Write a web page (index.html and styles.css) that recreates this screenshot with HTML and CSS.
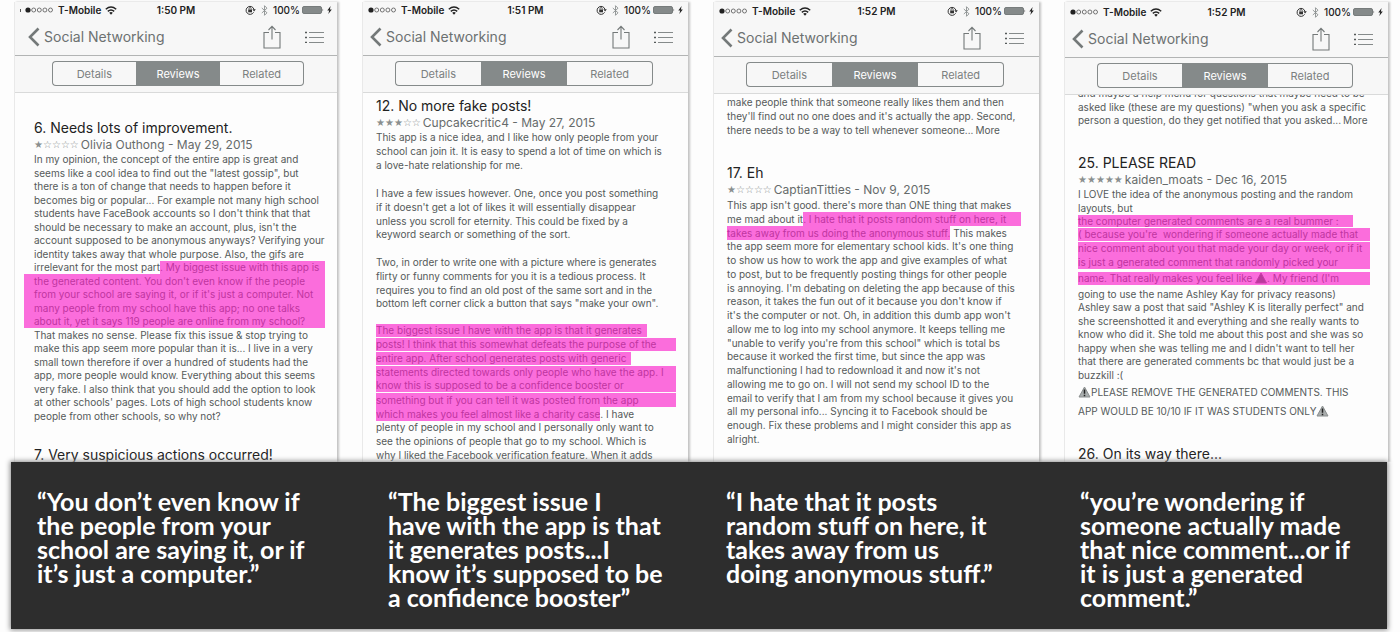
FILE: index.html
```html
<!DOCTYPE html>
<html lang="en">
<head>
<meta charset="utf-8">
<title>App reviews</title>
<link rel="stylesheet" href="styles.css">
</head>
<body>
<svg class="sprite" aria-hidden="true">
  <symbol id="dots" viewBox="0 0 29 6"><circle cx="3" cy="3" r="2.6" fill="#222"/><g fill="none" stroke="#555" stroke-width=".8"><circle cx="8.700" cy="3" r="2"/><circle cx="14.300" cy="3" r="2"/><circle cx="19.900" cy="3" r="2"/><circle cx="25.500" cy="3" r="2"/></g></symbol>
  <symbol id="wifi" viewBox="0 0 12 9"><g fill="none" stroke="#222" stroke-width="1.500"><path d="M.8 3.300Q6-1.200 11.200 3.300"/><path d="M2.800 5.400Q6 2.600 9.200 5.400"/></g><path d="M4.200 6.800Q6 5.400 7.800 6.800L6 8.800Z" fill="#222"/></symbol>
  <symbol id="lock" viewBox="0 0 11 10"><path d="M8.600 7.300A4 4 0 1 1 9 4.500" fill="none" stroke="#333" stroke-width="1"/><path d="M7.400 4.300h3.400L9.100 6.500Z" fill="#333"/><rect x="3.200" y="4.500" width="3.800" height="2.800" fill="#333"/><path d="M4 4.500V3.600a1.100 1.100 0 0 1 2.200 0v.9" fill="none" stroke="#333" stroke-width=".8"/></symbol>
  <symbol id="bt" viewBox="0 0 7 11"><path d="M.8 3 6 7.800 3.500 10.300V.7L6 3.200.8 8" fill="none" stroke="#8a8f8f" stroke-width=".9"/></symbol>
  <symbol id="batt" viewBox="0 0 22 8"><rect x=".5" y=".5" width="19" height="7" rx="1.500" fill="#858a8a" stroke="#777c7c"/><path d="M20.500 2.500q1.500 1.500 0 3Z" fill="#555"/></symbol>
  <symbol id="bolt" viewBox="0 0 5 8"><path d="M3.600 0 .3 4.400H2.200L1.300 8 4.800 3.400H2.900Z" fill="#222"/></symbol>
  <symbol id="back" viewBox="0 0 12 20"><path d="M10.500 1.500 2 10l8.500 8.500" fill="none" stroke="#747979" stroke-width="2.600"/></symbol>
  <symbol id="share" viewBox="0 0 18 24"><g fill="none" stroke="#747979" stroke-width="1.100"><path d="M6 7.500H1v15.500h16V7.500H12"/><path d="M9 14.500V1.500M5.500 5 9 1.300 12.500 5"/></g></symbol>
  <symbol id="list" viewBox="0 0 19 12"><path d="M4 1.500h15M4 6.500h15M4 11.500h15" stroke="#858a8a" fill="none"/><path d="M0 1.500h2M0 6.500h2M0 11.500h2" stroke="#555a5a" fill="none" stroke-width="1.400"/></symbol>
  <symbol id="warn" viewBox="0 0 12 12"><path d="M6 1 11.500 11H.5Z" fill="#a9adad" stroke="#8a8e8e" stroke-linejoin="round"/><path d="M6 3.500v4.200M6 8.700v1.500" stroke="#222" stroke-width="1.500"/></symbol>
  <symbol id="alert" viewBox="0 0 12 12"><path d="M6 1 11.500 11H.5Z" fill="#b93a9c" stroke="#c93aa9" stroke-linejoin="round"/></symbol>
</svg>

<main class="screens">
  <section class="phone first">
    <header class="bar">
      <div class="status">
        <div class="carrier"><i class="tick"></i><svg width="29" height="6"><use href="#dots"/></svg><span>T-Mobile</span><svg width="12" height="9"><use href="#wifi"/></svg></div>
        <time>1:50 PM</time>
        <div class="power"><svg width="11" height="10"><use href="#lock"/></svg><svg width="7" height="11"><use href="#bt"/></svg><span>100%</span><svg class="cell" width="22" height="8"><use href="#batt"/></svg><svg class="bolt" width="5" height="8"><use href="#bolt"/></svg></div>
      </div>
      <nav class="nav">
        <a class="back" href="#"><svg width="12" height="20"><use href="#back"/></svg>Social Networking</a>
        <button class="icon" aria-label="Share"><svg width="18" height="24"><use href="#share"/></svg></button>
        <button class="icon" aria-label="List"><svg width="19" height="12"><use href="#list"/></svg></button>
      </nav>
      <div class="tabs"><button>Details</button><button class="on">Reviews</button><button>Related</button></div>
    </header>
    <div class="reviews">
      <h2>6. Needs lots of improvement.</h2>
      <div class="by"><span class="stars">★☆☆☆☆</span>Olivia Outhong - May 29, 2015</div>
      <p class="snug">
        <span>In my opinion, the concept of the entire app is great and</span>
        <span>seems like a cool idea to find out the "latest gossip", but</span>
        <span>there is a ton of change that needs to happen before it</span>
        <span>becomes big or popular... For example not many high school</span>
        <span>students have FaceBook accounts so I don't think that that</span>
        <span>should be necessary to make an account, plus, isn't the</span>
        <span>account supposed to be anonymous anyways? Verifying your</span>
        <span>identity takes away that whole purpose. Also, the gifs are</span>
        <span class="split">irrelevant for the most part<mark class="grow">. My biggest issue with this app is</mark></span>
        <span><mark class="full out">the generated content. You don't even know if the people</mark></span>
        <span><mark class="full out">from your school are saying it, or if it's just a computer. Not</mark></span>
        <span><mark class="full out">many people from my school have this app; no one talks</mark></span>
        <span><mark class="full out">about it, yet it says 119 people are online from my school?</mark></span>
        <span>That makes no sense. Please fix this issue &amp; stop trying to</span>
        <span>make this app seem more popular than it is... I live in a very</span>
        <span>small town therefore if over a hundred of students had the</span>
        <span>app, more people would know. Everything about this seems</span>
        <span>very fake. I also think that you should add the option to look</span>
        <span>at other schools' pages. Lots of high school students know</span>
        <span>people from other schools, so why not?</span>
      </p>
      <h2 class="next">7. Very suspicious actions occurred!</h2>
    </div>
  </section>

  <section class="phone second">
    <header class="bar">
      <div class="status">
        <div class="carrier"><svg width="29" height="6"><use href="#dots"/></svg><span>T-Mobile</span><svg width="12" height="9"><use href="#wifi"/></svg></div>
        <time>1:51 PM</time>
        <div class="power"><svg width="11" height="10"><use href="#lock"/></svg><svg width="7" height="11"><use href="#bt"/></svg><span>100%</span><svg class="cell" width="22" height="8"><use href="#batt"/></svg><svg class="bolt" width="5" height="8"><use href="#bolt"/></svg></div>
      </div>
      <nav class="nav">
        <a class="back" href="#"><svg width="12" height="20"><use href="#back"/></svg>Social Networking</a>
        <button class="icon" aria-label="Share"><svg width="18" height="24"><use href="#share"/></svg></button>
        <button class="icon" aria-label="List"><svg width="19" height="12"><use href="#list"/></svg></button>
      </nav>
      <div class="tabs"><button>Details</button><button class="on">Reviews</button><button>Related</button></div>
    </header>
    <div class="reviews">
      <h2>12. No more fake posts!</h2>
      <div class="by"><span class="stars">★★★☆☆</span>Cupcakecritic4 - May 27, 2015</div>
      <p>
        <span>This app is a nice idea, and I like how only people from your</span>
        <span>school can join it. It is easy to spend a lot of time on which is</span>
        <span>a love-hate relationship for me.</span>
      </p>
      <p>
        <span>I have a few issues however. One, once you post something</span>
        <span>if it doesn't get a lot of likes it will essentially disappear</span>
        <span>unless you scroll for eternity. This could be fixed by a</span>
        <span>keyword search or something of the sort.</span>
      </p>
      <p>
        <span>Two, in order to write one with a picture where is generates</span>
        <span>flirty or funny comments for you it is a tedious process. It</span>
        <span>requires you to find an old post of the same sort and in the</span>
        <span>bottom left corner click a button that says "make your own".</span>
      </p>
      <p>
        <span><mark class="gap trail">The biggest issue I have with the app is that it generates</mark></span>
        <span><mark class="full gap">posts! I think that this somewhat defeats the purpose of the</mark></span>
        <span><mark class="gap trail">entire app. After school generates posts with generic</mark></span>
        <span><mark class="full">statements directed towards only people who have the app. I</mark></span>
        <span><mark class="full gap">know this is supposed to be a confidence booster or</mark></span>
        <span><mark class="full">something but if you can tell it was posted from the app</mark></span>
        <span><mark>which makes you feel almost like a charity case</mark>. I have</span>
        <span>plenty of people in my school and I personally only want to</span>
        <span>see the opinions of people that go to my school. Which is</span>
        <span>why I liked the Facebook verification feature. When it adds</span>
      </p>
    </div>
  </section>

  <section class="phone third">
    <header class="bar">
      <div class="status">
        <div class="carrier"><svg width="29" height="6"><use href="#dots"/></svg><span>T-Mobile</span><svg width="12" height="9"><use href="#wifi"/></svg></div>
        <time>1:52 PM</time>
        <div class="power"><svg width="11" height="10"><use href="#lock"/></svg><svg width="7" height="11"><use href="#bt"/></svg><span>100%</span><svg class="cell" width="22" height="8"><use href="#batt"/></svg><svg class="bolt" width="5" height="8"><use href="#bolt"/></svg></div>
      </div>
      <nav class="nav">
        <a class="back" href="#"><svg width="12" height="20"><use href="#back"/></svg>Social Networking</a>
        <button class="icon" aria-label="Share"><svg width="18" height="24"><use href="#share"/></svg></button>
        <button class="icon" aria-label="List"><svg width="19" height="12"><use href="#list"/></svg></button>
      </nav>
      <div class="tabs"><button>Details</button><button class="on">Reviews</button><button>Related</button></div>
    </header>
    <div class="reviews">
      <p>
        <span>make people think that someone really likes them and then</span>
        <span>they'll find out no one does and it's actually the app. Second,</span>
        <span>there needs to be a way to tell whenever someone...<a class="more" href="#">More</a></span>
      </p>
      <h2>17. Eh</h2>
      <div class="by"><span class="stars">★☆☆☆☆</span>CaptianTitties - Nov 9, 2015</div>
      <p>
        <span>This app isn't good. there's more than ONE thing that makes</span>
        <span class="split">me mad about it<mark class="grow">. I hate that it posts random stuff on here, it</mark></span>
        <span><mark>takes away from us doing the anonymous stuff.</mark> This makes</span>
        <span>the app seem more for elementary school kids. It's one thing</span>
        <span>to show us how to work the app and give examples of what</span>
        <span>to post, but to be frequently posting things for other people</span>
        <span>is annoying. I'm debating on deleting the app because of this</span>
        <span>reason, it takes the fun out of it because you don't know if</span>
        <span>it's the computer or not. Oh, in addition this dumb app won't</span>
        <span>allow me to log into my school anymore. It keeps telling me</span>
        <span>"unable to verify you're from this school" which is total bs</span>
        <span>because it worked the first time, but since the app was</span>
        <span>malfunctioning I had to redownload it and now it's not</span>
        <span>allowing me to go on. I will not send my school ID to the</span>
        <span>email to verify that I am from my school because it gives you</span>
        <span>all my personal info... Syncing it to Facebook should be</span>
        <span>enough. Fix these problems and I might consider this app as</span>
        <span>alright.</span>
      </p>
    </div>
  </section>

  <section class="phone fourth">
    <header class="bar">
      <div class="status">
        <div class="carrier"><svg width="29" height="6"><use href="#dots"/></svg><span>T-Mobile</span><svg width="12" height="9"><use href="#wifi"/></svg></div>
        <time>1:52 PM</time>
        <div class="power"><svg width="11" height="10"><use href="#lock"/></svg><svg width="7" height="11"><use href="#bt"/></svg><span>100%</span><svg class="cell" width="22" height="8"><use href="#batt"/></svg><svg class="bolt" width="5" height="8"><use href="#bolt"/></svg></div>
      </div>
      <nav class="nav">
        <a class="back" href="#"><svg width="12" height="20"><use href="#back"/></svg>Social Networking</a>
        <button class="icon" aria-label="Share"><svg width="18" height="24"><use href="#share"/></svg></button>
        <button class="icon" aria-label="List"><svg width="19" height="12"><use href="#list"/></svg></button>
      </nav>
      <div class="tabs"><button>Details</button><button class="on">Reviews</button><button>Related</button></div>
    </header>
    <div class="reviews">
      <p class="cut snug">
        <span>and maybe a help menu for questions that maybe need to be</span>
        <span>asked like (these are my questions) "when you ask a specific</span>
        <span>person a question, do they get notified that you asked...<a class="more" href="#">More</a></span>
      </p>
      <h2>25. PLEASE READ</h2>
      <div class="by"><span class="stars">★★★★★</span>kaiden_moats - Dec 16, 2015</div>
      <p class="snug">
        <span>I LOVE the idea of the anonymous posting and the random</span>
        <span>layouts, but</span>
        <span><mark class="gap trail long">the computer generated comments are a real bummer :</mark></span>
        <span><mark class="full gap">( because you're&nbsp; wondering if someone actually made that</mark></span>
        <span><mark class="full">nice comment about you that made your day or week, or if it</mark></span>
        <span><mark class="full">is just a generated comment that randomly picked your</mark></span>
        <span class="tall"><mark class="full">name. That really makes you feel like <svg class="inline" width="12" height="12"><use href="#alert"/></svg>. My friend (I'm</mark></span>
        <span>going to use the name Ashley Kay for privacy reasons)</span>
        <span>Ashley saw a post that said "Ashley K is literally perfect" and</span>
        <span>she screenshotted it and everything and she really wants to</span>
        <span>know who did it. She told me about this post and she was so</span>
        <span>happy when she was telling me and I didn't want to tell her</span>
        <span>that there are generated comments bc that would just be a</span>
        <span>buzzkill :(</span>
      </p>
      <p class="shout">
        <span><svg class="inline" width="13" height="12"><use href="#warn"/></svg>PLEASE REMOVE THE GENERATED COMMENTS. THIS</span>
        <span>APP WOULD BE 10/10 IF IT WAS STUDENTS ONLY<svg class="inline" width="13" height="12"><use href="#warn"/></svg></span>
      </p>
      <h2 class="next">26. On its way there...</h2>
    </div>
  </section>
</main>

<footer class="quotes">
  <blockquote>“You don’t even know if<br>the people from your<br>school are saying it, or if<br>it’s just a computer.”</blockquote>
  <blockquote>“The biggest issue I<br>have with the app is that<br>it generates posts...I<br>know it’s supposed to be<br>a confidence booster”</blockquote>
  <blockquote>“I hate that it posts<br>random stuff on here, it<br>takes away from us<br>doing anonymous stuff.”</blockquote>
  <blockquote>“you’re wondering if<br>someone actually made<br>that nice comment...or if<br>it is just a generated<br>comment.”</blockquote>
</footer>
</body>
</html>
```
FILE: styles.css
```css
* { box-sizing: border-box; }
body {
  margin: 0;
  height: 100vh;
  display: flex;
  flex-direction: column;
  background: #fdfdfd;
  font-family: Inter, "Liberation Sans", sans-serif;
  color: #555a5a;
}
h2, p, blockquote { margin: 0; }
a { color: inherit; text-decoration: none; }
button { font: inherit; color: inherit; background: none; border: 0; padding: 0; }
svg { display: block; flex: none; }
.sprite { position: absolute; width: 0; height: 0; }

.screens {
  flex: 1 1 0;
  min-height: 0;
  overflow: hidden;
  display: grid;
  grid-template-columns: 323fr 326fr 326fr 324fr;
  grid-template-rows: 100%;
  gap: 25px;
  padding: 2px 12px 0 14px;
}
.phone {
  display: flex;
  flex-direction: column;
  min-width: 0;
  border-left: 1px solid #e9e9e9;
  box-shadow: 2px 0 2px #c4c4c4;
  background: #fdfdfd;
}

.bar { background: #f7f7f7; flex: none; }
.third .bar { padding-top: 1px; }
.fourth .bar { padding-top: 2px; }
.status {
  display: grid;
  grid-template-columns: 1fr auto 1fr;
  align-items: center;
  height: 16px;
  padding: 0 5px;
  font-size: 10px;
  font-weight: 600;
  color: #222;
}
.carrier, .power { display: flex; align-items: center; gap: 5px; }
.carrier { gap: 4px; }
.power { justify-content: flex-end; font-weight: 500; }
.cell { margin-left: -3px; }
.bolt { margin-left: -2px; }
.tick { width: 1px; height: 3px; background: #555; }
.nav {
  display: flex;
  align-items: center;
  gap: 24px;
  height: 38px;
  padding: 0 15px 0 7px;
  border-bottom: 1px solid #b2b4b4;
  color: #6c7171;
}
.back { display: flex; align-items: center; gap: 4px; flex: 1; font-size: 14px; white-space: nowrap; }
.tabs {
  display: flex;
  padding: 5px 35px 6px 32px;
  border-bottom: 1px solid #d9dada;
}
.tabs button {
  flex: 1;
  height: 25px;
  border: 1px solid #858a8a;
  font-size: 11px;
  color: #7b8080;
}
.tabs button:first-child { border-radius: 4px 0 0 4px; border-right: 0; }
.tabs button:last-child { border-radius: 0 4px 4px 0; border-left: 0; }
.tabs .on { background: #858a8a; color: #fff; }
.first .nav { padding-left: 13px; padding-right: 13px; }
.first .tabs { padding-left: 37px; padding-right: 33px; }

.reviews {
  flex: 1;
  min-height: 0;
  overflow: hidden;
  padding: 0 12px 0 13px;
  white-space: nowrap;
}
.first .reviews { padding: 26px 12px 0 9px; }
.first .reviews > * { margin-left: 10px; }
.second .reviews { padding-top: 4px; }
.third .reviews { padding: 1px 18px 0 13px; }
.fourth .reviews { padding-right: 18px; }
.reviews h2 { font-size: 14px; line-height: 18px; font-weight: 400; color: #222; }
.by { display: flex; gap: 2px; font-size: 12px; line-height: 16px; color: #666b6b; }
.stars { font-family: "DejaVu Sans", sans-serif; font-size: 10px; color: #8a8f8f; }
.more { margin-left: 2px; }
.reviews p { font-size: 10px; line-height: 14px; }
.reviews p > span { display: block; }
.reviews p > span:nth-child(4n) { line-height: 13px; }
.reviews p + p { margin-top: 14px; }
.second .by + p { margin-top: -1px; }
.reviews p.snug > span:nth-child(n) { line-height: 14px; }
.reviews p.snug > span:nth-child(odd) { line-height: 13px; }
.reviews p.snug > .tall { line-height: 18px; }
.reviews p + h2 { margin-top: 27px; }
.reviews p + h2.next { margin-top: 24px; }
.first .reviews .next { margin-top: 23px; }
.reviews .cut { margin-top: -8px; }
.reviews .shout.shout { margin-top: 1px; line-height: 19px; }
.inline { display: inline-block; vertical-align: -2px; }

mark {
  display: inline-block;
  vertical-align: top;
  background: #fb6ddc;
  color: #bf35a0;
}
mark.full { display: block; }
mark.out { margin-left: -10px; padding-left: 10px; }
mark.gap { line-height: 13px; margin-bottom: 1px; }
mark.trail { padding-right: 5px; }
mark.long { padding-right: 14px; line-height: 12px; }
.tall mark { line-height: 13px; margin: 3px 0 2px; }
.reviews p > .split { display: flex; }
.grow { flex: 1; }

.quotes {
  flex: none;
  display: grid;
  grid-template-columns: 351fr 338fr 354fr 307fr;
  margin: 0 13px 3px 11px;
  padding: 27px 0 20px 26px;
  background: #2d2d2d;
  color: #fff;
  box-shadow: 0 0 5px 1px #8c8c8c;
  font: 700 25px/24px Lato, "Open Sans", sans-serif;
  white-space: nowrap;
  z-index: 1;
}
```
